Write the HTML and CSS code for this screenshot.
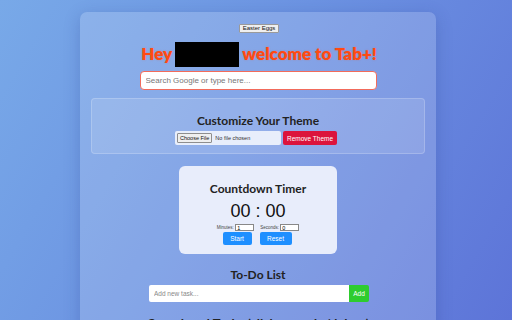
FILE: index.html
```html
<!DOCTYPE html>
<html lang="en">
<head>
    <meta charset="UTF-8">
    <meta name="viewport" content="width=device-width, initial-scale=1.0">
    <title>Tab+</title>
    <link rel="stylesheet" href="styles.css">
</head>
<body>
    <div class="container">
        <div class="eggs-row">
            <button class="eggs-btn">Easter Eggs</button>
        </div>

        <h1 class="greeting">Hey <span class="name-box"></span> welcome to Tab+!</h1>

        <input type="text" class="search-input" placeholder="Search Google or type here...">

        <div class="theme-section">
            <h2>Customize Your Theme</h2>
            <div class="theme-controls">
                <div class="file-box">
                    <span class="file-btn">Choose File</span>
                    <span class="file-name">No file chosen</span>
                </div>
                <button class="remove-btn">Remove Theme</button>
            </div>
        </div>

        <div class="timer-card">
            <h2>Countdown Timer</h2>
            <div class="timer-display">00 : 00</div>
            <div class="timer-inputs">
                <label>Minutes: <input type="text" class="time-input" value="1"></label>
                <label>Seconds: <input type="text" class="time-input" value="0"></label>
            </div>
            <div class="timer-buttons">
                <button class="blue-btn start">Start</button>
                <button class="blue-btn reset">Reset</button>
            </div>
        </div>

        <div class="todo-section">
            <h2>To-Do List</h2>
            <div class="todo-row">
                <input type="text" class="todo-input" placeholder="Add new task...">
                <button class="add-btn">Add</button>
            </div>
            <h2 class="completed-title">Completed Tasks (click to undo/delete)</h2>
        </div>
    </div>
</body>
</html>
```

FILE: styles.css
```css
html, body {
    height: 320px;
    overflow: hidden;
}

body {
    margin: 0;
    padding-top: 12px;
    font-family: Lato, "Liberation Sans", sans-serif;
    background: linear-gradient(120deg, #78a9e8 0%, #6c93e2 45%, #5d74d8 100%);
}

.container {
    width: 356px;
    margin-left: 80px;
    height: 330px;
    box-sizing: border-box;
    padding: 12px 11px 0;
    background-color: rgba(255, 255, 255, 0.17);
    border-radius: 7px;
    box-shadow: 0 4px 16px rgba(40, 60, 140, 0.25);
    text-align: center;
}

.eggs-row {
    height: 9px;
    display: flex;
    justify-content: center;
    padding-left: 2px;
}

.eggs-btn {
    font-family: "Liberation Sans", Arial, sans-serif;
    font-size: 6px;
    height: 9px;
    line-height: 7px;
    padding: 0 3px;
    background: #efefef;
    border: 1px solid #9a9a9a;
    border-radius: 1px;
    color: #111;
}

.greeting {
    margin: 8px 0 0;
    height: 26px;
    font-size: 17px;
    line-height: 26px;
    font-weight: 800;
    color: #ff4a12;
    display: flex;
    justify-content: center;
    align-items: center;
    gap: 3px;
    padding-left: 2px;
    text-shadow: 0 0 2px rgba(255, 80, 20, 0.3);
}

.name-box {
    display: inline-block;
    width: 64px;
    height: 25px;
    background: #000;
}

.search-input {
    display: block;
    box-sizing: border-box;
    width: 237px;
    height: 19px;
    margin: 4px auto 0;
    padding: 0 5px;
    border: 1px solid #f26b5b;
    border-radius: 4px;
    font-family: "Liberation Sans", Arial, sans-serif;
    font-size: 8px;
    background: #fff;
}

.search-input::placeholder {
    color: #777;
}

.theme-section {
    margin-top: 8px;
    height: 56px;
    box-sizing: border-box;
    padding-top: 13px;
    background-color: rgba(255, 255, 255, 0.12);
    border: 1px solid rgba(255, 255, 255, 0.2);
    border-radius: 4px;
}

h2 {
    margin: 0;
    font-size: 12px;
    font-weight: 700;
    color: #222;
}

.theme-section h2 {
    line-height: 18px;
}

.theme-controls {
    display: flex;
    justify-content: center;
    gap: 2px;
    padding-right: 4px;
    margin-top: 1px;
}

.file-box {
    width: 106px;
    height: 14px;
    box-sizing: border-box;
    padding: 2px;
    display: flex;
    align-items: center;
    gap: 3px;
    background: #e8eefb;
    border-radius: 2px;
    font-family: "Liberation Sans", Arial, sans-serif;
    font-size: 5.5px;
    color: #333;
}

.file-btn {
    background: #efefef;
    border: 1px solid #8e8e8e;
    border-radius: 1px;
    padding: 1px 2px;
    color: #111;
}

.remove-btn {
    width: 54px;
    height: 14px;
    padding: 0;
    border: none;
    border-radius: 2px;
    background: #dc143c;
    color: #fff;
    font-family: "Liberation Sans", Arial, sans-serif;
    font-size: 6.5px;
}

.timer-card {
    width: 158px;
    height: 88px;
    box-sizing: border-box;
    margin: 12px auto 0;
    padding-top: 15px;
    background: #e8edfb;
    border-radius: 6px;
}

.timer-card h2 {
    line-height: 16px;
}

.timer-display {
    margin-top: 4px;
    font-family: "Liberation Sans", Arial, sans-serif;
    font-size: 18px;
    line-height: 20px;
    color: #111;
}

.timer-inputs {
    margin-top: 3px;
    display: flex;
    justify-content: center;
    gap: 6px;
    font-family: "Liberation Sans", Arial, sans-serif;
    font-size: 4.5px;
    color: #444;
}

.time-input {
    width: 19px;
    height: 7px;
    box-sizing: border-box;
    padding: 0 1px;
    border: 1px solid #888;
    font-size: 5.5px;
    vertical-align: middle;
}

.timer-buttons {
    display: flex;
    justify-content: center;
    gap: 8px;
    margin-top: 1px;
    padding-right: 2px;
}

.blue-btn {
    height: 13px;
    padding: 0;
    border: none;
    border-radius: 2px;
    background: #1e8fff;
    color: #fff;
    font-family: "Liberation Sans", Arial, sans-serif;
    font-size: 6.5px;
}

.start {
    width: 29px;
}

.reset {
    width: 32px;
}

.todo-section {
    margin-top: 13px;
}

.todo-section h2 {
    line-height: 16px;
}

.todo-row {
    display: flex;
    justify-content: center;
    margin-top: 2px;
    padding-left: 2px;
}

.todo-input {
    width: 200px;
    height: 17px;
    box-sizing: border-box;
    padding: 0 5px;
    border: none;
    border-radius: 2px 0 0 2px;
    font-family: "Liberation Sans", Arial, sans-serif;
    font-size: 6.5px;
}

.todo-input::placeholder {
    color: #888;
}

.add-btn {
    width: 20px;
    height: 17px;
    padding: 0;
    border: none;
    border-radius: 0 2px 2px 0;
    background: #2ecc2e;
    color: #fff;
    font-family: "Liberation Sans", Arial, sans-serif;
    font-size: 6.5px;
}

.todo-section .completed-title {
    margin-top: 14px;
    font-size: 13px;
}
```
